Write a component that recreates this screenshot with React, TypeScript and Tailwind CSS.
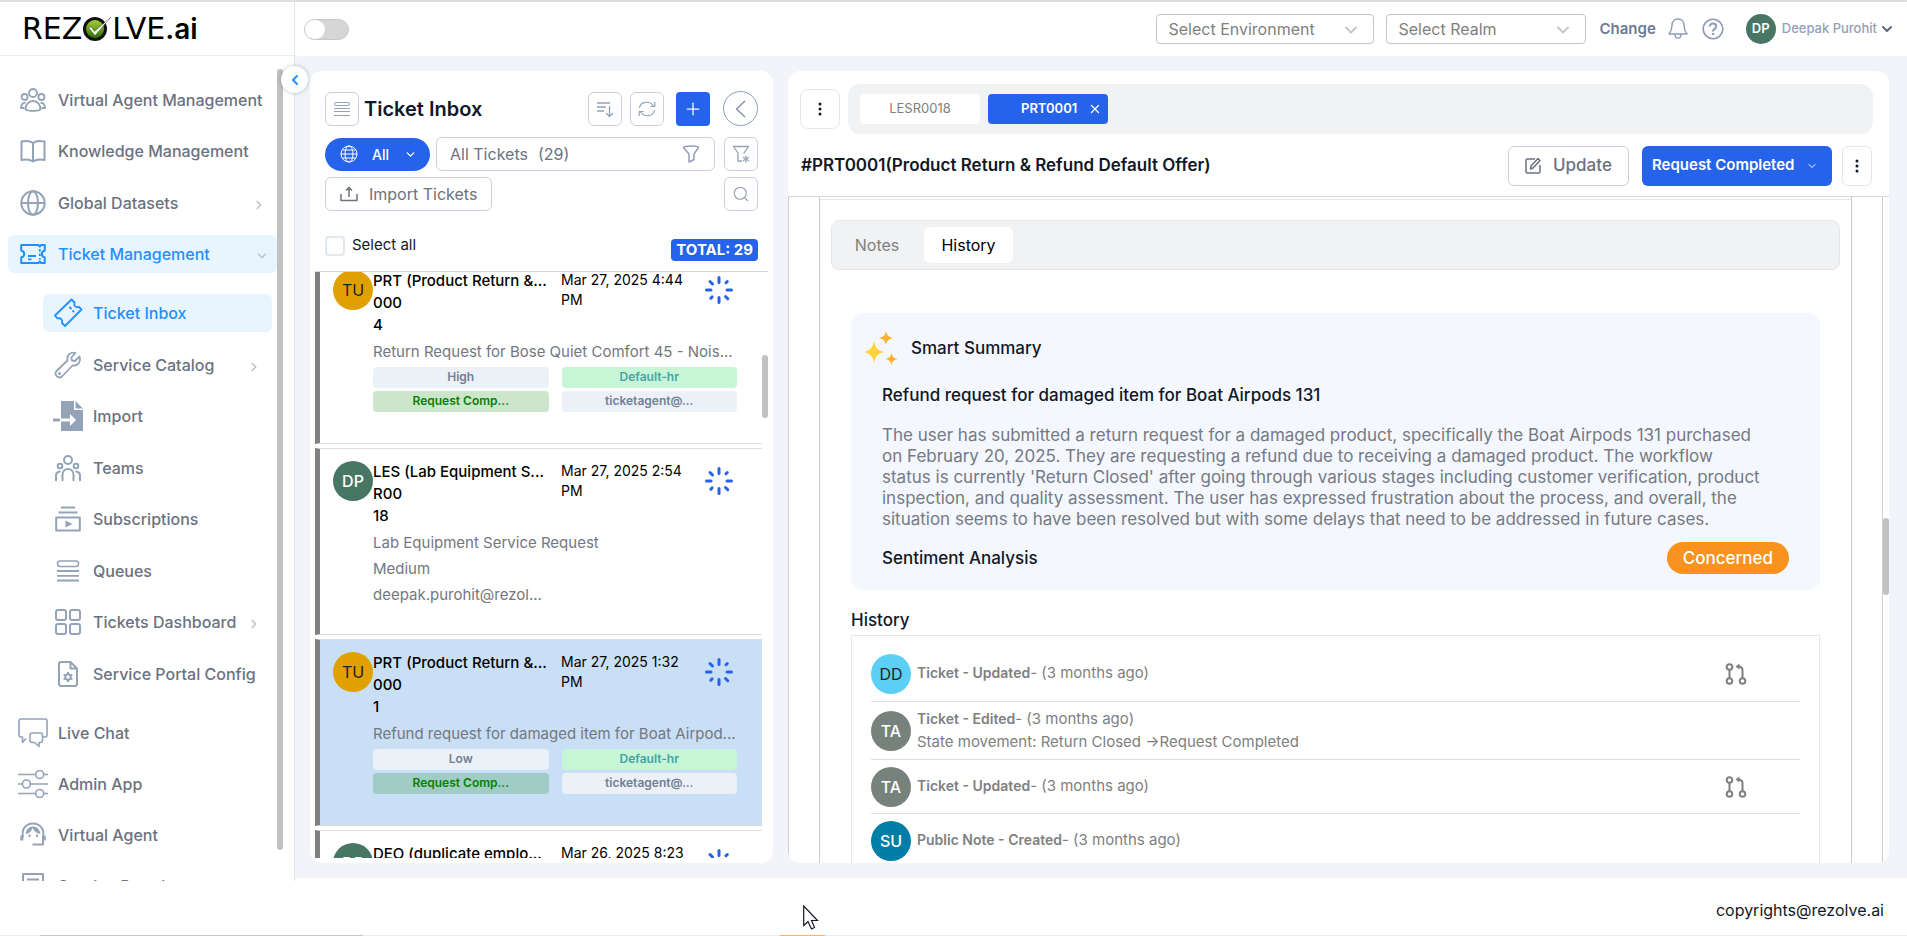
import type { ReactNode } from 'react';
import { ChevronDown, ChevronLeft, ChevronRight, Plus, Search, X } from 'lucide-react';

type IconProps = { children: ReactNode; w?: number; h?: number; className?: string; sw?: number };

function Icon({ children, w = 26, h = 26, className = '', sw = 2 }: IconProps) {
  return (
    <svg
      width={w}
      height={h}
      viewBox={`0 0 ${w} ${h}`}
      fill="none"
      stroke="currentColor"
      strokeWidth={sw}
      strokeLinejoin="round"
      className={`shrink-0 ${className}`}
      aria-hidden="true"
    >
      {children}
    </svg>
  );
}

const icons = {
  users: (
    <Icon sw={1.8}>
      <circle cx="13" cy="6" r="4" />
      <circle cx="4.6" cy="10" r="3" />
      <circle cx="21.4" cy="10" r="3" />
      <path d="M5.5 22.5c0-5 3-8.5 7.5-8.5s7.5 3.5 7.5 8.5c-3 1.800-12 1.800-15 0z" />
      <path d="M5.500 15.800C2.500 15.500 1 18 1 21h3.500M20.500 15.800c3-.3 4.500 2.200 4.500 5.200h-3.500" />
    </Icon>
  ),
  book: (
    <Icon>
      <path d="M13 5c-3-2.300-8-2.300-11.500-1.500v18.500c4-.8 8.500-.5 11.500 1.500 3-2 7.500-2.300 11.500-1.500V3.500C21 2.700 16 2.700 13 5zM13 5v18.500" />
    </Icon>
  ),
  globe: (
    <Icon>
      <circle cx="13" cy="13" r="11.700" />
      <ellipse cx="13" cy="13" rx="5" ry="11.700" />
      <path d="M1.300 13h23.400" />
    </Icon>
  ),
  ticket: (
    <Icon>
      <path d="M1.200 4h17.300l1.300 1.500L21.200 4h3.600v5.500c-4 1-4 6 0 7V22h-3.600l-1.400-1.500L18.500 22H1.200v-5.500c4-1 4-6 0-7z" />
      <path d="M8 15h8M8 18.300h3.500M19.800 8v2.500M19.800 12.500V15M19.800 17v1.500" strokeWidth="1.800" />
    </Icon>
  ),
  inbox: (
    <Icon w={30} h={30} sw={1.8}>
      <path d="M2 17.500 18.500 1.500l3 3c-1 3 1 5.500 4.500 4.500l2.500 2.500L12 28l-3-3c1-3-1-5.500-4.500-4.500z" />
      <path d="m16.500 9 2 2M19.500 12.500l1.500 1.500" />
    </Icon>
  ),
  wrench: (
    <Icon w={28} h={28} sw={1.8}>
      <path d="M25.500 5.500 21 10l-3-.500-.700-3L21.500 2c-4.500-1.300-9 1.500-8 7.500L2.500 20c-3 3.500 2 8.500 5.500 5.500L18.500 14.500c6 1 8.500-4.500 7-9z" />
      <circle cx="5.500" cy="22.500" r=".6" />
    </Icon>
  ),
  fileImport: (
    <Icon w={30} h={30} className="fill-current stroke-none">
      <path d="M8 0h13v9h9v21H8v-9.500h9V25l6-6-6-6v4.500H8zM22.500 0 30 7.500h-7.500z" />
      <path d="M0 17.500h7v3H0z" />
    </Icon>
  ),
  teams: (
    <Icon>
      <circle cx="13" cy="5" r="4" />
      <circle cx="5" cy="11" r="2.300" />
      <circle cx="21" cy="11" r="2.300" />
      <path d="M7.500 26v-6c0-8 11-8 11 0v6M1 26v-5c0-3 1.500-4.500 4.500-4.500M25 26v-5c0-3-1.500-4.500-4.500-4.500" />
    </Icon>
  ),
  subs: (
    <Icon>
      <path d="M6 1.500h14M3.500 6.500h19M1.200 11.500h23.600v13H1.200z" />
      <path d="m10.500 14.500 7 3.500-7 3.500z" className="fill-current stroke-none" />
    </Icon>
  ),
  queues: (
    <Icon w={24} h={24} sw={1.5}>
      <rect x="1.500" y="2" width="21" height="5.500" rx="2.500" />
      <path d="M1 12h22M1 16.800h22M1 21.500h22" strokeWidth="1.800" />
    </Icon>
  ),
  grid: (
    <Icon>
      <rect x="1" y="1" width="10" height="10" rx="2" />
      <rect x="15" y="1" width="10" height="10" rx="2" />
      <rect x="1" y="15" width="10" height="10" rx="2" />
      <rect x="15" y="15" width="10" height="10" rx="2" />
    </Icon>
  ),
  config: (
    <Icon w={20} h={26}>
      <path d="M12.500 1H3a2 2 0 0 0-2 2v20a2 2 0 0 0 2 2h14a2 2 0 0 0 2-2V7.500L12.500 1v6.500H19" />
      <circle cx="10" cy="16" r="2.700" />
      <path d="M10 11v2M10 19v2M5.600 13.500l1.700 1M12.700 17.500l1.700 1M5.600 18.500l1.700-1M12.700 14.500l1.700-1" />
    </Icon>
  ),
  chat: (
    <Icon w={30} h={30} sw={1.6}>
      <path d="M8 20.500 4.500 24.500v-5.500H3c-1.200 0-2-.8-2-2V3c0-1.200.8-2 2-2h24c1.200 0 2 .8 2 2v14c0 1.200-.8 2-2 2h-2" />
      <path d="M14 15h8.500c1.200 0 2 .8 2 2v5.500c0 1.200-.8 2-2 2h-1.500v4l-4.500-4H14c-1.200 0-2-.8-2-2V17c0-1.200.8-2 2-2z" />
    </Icon>
  ),
  sliders: (
    <Icon w={30} h={28} sw={1.6}>
      <path d="M0 4.500h17.500M26 4.500h4M0 14h4.500M13 14h17M0 23.500h17.500M26 23.500h4" />
      <circle cx="21.700" cy="4.500" r="4" />
      <circle cx="8.500" cy="14" r="4" />
      <circle cx="21.700" cy="23.500" r="4" />
    </Icon>
  ),
  agent: (
    <Icon>
      <path d="M3 15.500C1 6 7 1.500 13 1.500S25 6 23 15.500v7H12.500" />
      <path d="M5.500 12c4-.5 6-3 7-6 1.500 3 4 5.500 8 6-1-5.500-4-7.500-7.500-7.500S6.500 6.500 5.500 12z" className="fill-current" strokeWidth="0" />
      <path d="M1.800 13.500v5M24.200 13.500v5" strokeWidth="3" />
      <path d="M9.500 12.500V15M17 12.500V15" />
    </Icon>
  ),
  portal: (
    <Icon w={22} h={26}>
      <path d="M1 25V1h20v24zM5 6.500h12M5 11h12" />
    </Icon>
  ),
};

type NavEntry = { label: string; icon: keyof typeof icons; arrow?: boolean; active?: boolean };

const topNav: NavEntry[] = [
  { label: 'Virtual Agent Management', icon: 'users' },
  { label: 'Knowledge Management', icon: 'book' },
  { label: 'Global Datasets', icon: 'globe', arrow: true },
];

const ticketNav: NavEntry[] = [
  { label: 'Ticket Inbox', icon: 'inbox', active: true },
  { label: 'Service Catalog', icon: 'wrench', arrow: true },
  { label: 'Import', icon: 'fileImport' },
  { label: 'Teams', icon: 'teams' },
  { label: 'Subscriptions', icon: 'subs' },
  { label: 'Queues', icon: 'queues' },
  { label: 'Tickets Dashboard', icon: 'grid', arrow: true },
  { label: 'Service Portal Config', icon: 'config' },
];

const bottomNav: NavEntry[] = [
  { label: 'Live Chat', icon: 'chat' },
  { label: 'Admin App', icon: 'sliders' },
  { label: 'Virtual Agent', icon: 'agent' },
  { label: 'Service Portal', icon: 'portal' },
];

function NavItem({ item, sub }: { item: NavEntry; sub?: boolean }) {
  return (
    <a
      href="#"
      className={`flex h-[38px] items-center rounded-md pl-[10px] pr-[11px] ${sub ? 'ml-[35px] mr-[5px]' : ''} ${
        item.active ? 'bg-[#e8f5ff] text-[#1e90ff]' : 'text-[#6b7280]'
      }`}
    >
      <span className={`flex w-[30px] shrink-0 justify-center ${item.active ? '' : 'text-[#94a3b8]'}`}>
        {icons[item.icon]}
      </span>
      <span className="ml-[10px] flex-1 whitespace-nowrap font-medium">{item.label}</span>
      {item.arrow && <ChevronRight size={14} strokeWidth={3} className="mt-1 text-[#c4c4c4]" />}
    </a>
  );
}

function Logo() {
  return (
    <a
      href="#"
      aria-label="Rezolve.ai home"
      className="flex items-center font-['DejaVu_Sans',sans-serif] text-[30px] leading-none text-black"
    >
      <span>REZ</span>
      <svg width="30" height="26" viewBox="0 0 30 26" aria-hidden="true">
        <defs>
          <linearGradient id="leaf" x1="0" y1="0" x2="0" y2="1">
            <stop offset="0" stopColor="#a3cf3a" />
            <stop offset="1" stopColor="#2f6f06" />
          </linearGradient>
        </defs>
        <circle cx="13" cy="13" r="12" fill="#111" />
        <circle cx="13" cy="13" r="9" fill="url(#leaf)" />
        <path d="M6.500 11.500 9 11l3.500 4.500L29 1 13 19.500z" fill="#fff" stroke="#333" strokeWidth=".4" />
      </svg>
      <span>LVE</span>
      <span className="font-['Inter',sans-serif] text-[28px] font-semibold">.ai</span>
    </a>
  );
}

function Sidebar() {
  return (
    <aside className="relative z-10 -mb-[3px] flex w-[295px] shrink-0 flex-col border-r border-[#e2e4ea] bg-white">
      <div className="flex h-[54px] shrink-0 items-center border-b border-[#ececf2] pl-[22px]">
        <Logo />
      </div>
      <nav className="flex min-h-0 flex-1 flex-col overflow-hidden pl-2 pr-[17px] pt-[25px] text-[16px]">
        <div className="flex h-[192px] shrink-0 flex-col justify-between">
          {topNav.map((item) => (
            <NavItem key={item.label} item={item} />
          ))}
          <a href="#" className="flex h-[38px] items-center rounded-md bg-[#e8f5ff] pl-[10px] pr-2 text-[#1e90ff]">
            <span className="flex w-[30px] shrink-0 justify-center">{icons.ticket}</span>
            <span className="ml-[10px] flex-1 whitespace-nowrap font-medium">Ticket Management</span>
            <ChevronDown size={14} strokeWidth={3} className="mt-1 text-[#c4c4c4]" />
          </a>
        </div>
        <div className="mt-[21px] flex h-[399px] shrink-0 flex-col justify-between">
          {ticketNav.map((item) => (
            <NavItem key={item.label} item={item} sub />
          ))}
        </div>
        <div className="mt-[21px] flex h-[191px] shrink-0 flex-col justify-between">
          {bottomNav.map((item) => (
            <NavItem key={item.label} item={item} />
          ))}
        </div>
      </nav>
      <div className="absolute bottom-[31px] right-[11px] top-[67px] w-[6px] rounded-full bg-[#c1c1c1]" />
      <button
        aria-label="Collapse sidebar"
        className="absolute -right-[14px] top-[64px] flex h-[27px] w-[27px] items-center justify-center rounded-full bg-white text-[#1e90ff] shadow-[0_0_4px_rgba(0,60,40,0.3)]"
      >
        <ChevronLeft size={16} strokeWidth={3} />
      </button>
    </aside>
  );
}

function HeaderSelect({ label, width }: { label: string; width: string }) {
  return (
    <div className={`relative ${width}`}>
      <select
        aria-label={label}
        className="h-[30px] w-full appearance-none rounded border border-[#c4c4c4] bg-white pl-[11px] text-[16px] text-[#808080]"
      >
        <option>{label}</option>
      </select>
      <ChevronDown
        size={20}
        strokeWidth={2.5}
        className="pointer-events-none absolute right-[13px] top-[6px] text-[#c8c8c8]"
      />
    </div>
  );
}

function Header() {
  return (
    <header className="flex h-[54px] shrink-0 items-center bg-white pl-[9px] pr-[12px] shadow-[0_1px_3px_rgba(60,60,100,0.12)]">
      <input
        type="checkbox"
        role="switch"
        aria-label="Toggle theme"
        className="flex h-[21px] w-[45px] appearance-none items-center rounded-full border border-[#c8c8c8] bg-[#d6d6d6] before:h-[19px] before:w-[20px] before:rounded-full before:bg-white"
      />
      <div className="ml-auto flex items-center">
        <HeaderSelect label="Select Environment" width="w-[218px]" />
        <div className="w-3" />
        <HeaderSelect label="Select Realm" width="w-[200px]" />
        <button className="ml-[13px] text-[15px] font-semibold text-[#6b7a94]">Change</button>
        <button aria-label="Notifications" className="ml-[12px] text-[#8d9bb5]">
          <Icon w={20} h={22} sw={1.4}>
            <path d="M10 1C6.500 1 4 3.500 4 7.500c0 4.500-1 6-3 8.500h18c-2-2.500-3-4-3-8.500C16 3.500 13.500 1 10 1zM7 16c0 5.500 6 5.500 6 0" />
          </Icon>
        </button>
        <button aria-label="Help" className="ml-[14px] text-[#8d9bb5]">
          <Icon w={22} h={22} sw={1.6}>
            <circle cx="11" cy="11" r="9.800" />
            <path d="M7.800 8.500c0-4 6.400-3.800 6.400 0 0 2.500-3.200 2.300-3.200 5" strokeWidth="2" />
            <path d="M11 15v2" strokeWidth="2.200" />
          </Icon>
        </button>
        <button className="ml-[22px] flex items-center text-[13px] font-medium text-[#94a0bb]">
          <span className="mr-[6px] flex h-[30px] w-[30px] items-center justify-center rounded-full bg-[#477665] font-semibold text-white">
            DP
          </span>
          Deepak Purohit
          <ChevronDown size={16} strokeWidth={3} className="ml-[2px] text-[#5f6b80]" />
        </button>
      </div>
    </header>
  );
}

function Spinner() {
  return (
    <svg
      width="30"
      height="30"
      viewBox="0 0 30 30"
      stroke="#2563eb"
      strokeWidth="3"
      strokeLinecap="round"
      className="shrink-0"
      aria-hidden="true"
    >
      <path d="M15 2.500v5M15 22.500v5M2.500 15h4.500M23 15h4.500M6 6.500l2.500 2.500M23.300 6.500l-1.300 1.300M6.800 23.200l1.300-1.300M21.500 21.500l2.300 2.300" />
    </svg>
  );
}

type Ticket = {
  key: string;
  initials: string;
  avatar: string;
  title: string;
  idTop: string;
  idBottom: string;
  date: string;
  desc: string;
  selected?: boolean;
  badges?: { text: string; tone: string }[];
  lines?: string[];
};

const grayTone = 'bg-[#ebf1f6] text-[#718096]';
const mintTone = 'bg-[#c6f6d5] text-[#45a3a5]';

const tickets: Ticket[] = [
  {
    key: 'PRT0004',
    initials: 'TU',
    avatar: 'bg-[#e0a000] text-[#222]',
    title: 'PRT (Product Return &...',
    idTop: '000',
    idBottom: '4',
    date: 'Mar 27, 2025 4:44 PM',
    desc: 'Return Request for Bose Quiet Comfort 45 - Nois...',
    badges: [
      { text: 'High', tone: grayTone },
      { text: 'Default-hr', tone: mintTone },
      { text: 'Request Comp...', tone: 'bg-[#cce6cc] text-[#058005]' },
      { text: 'ticketagent@...', tone: grayTone },
    ],
  },
  {
    key: 'LESR0018',
    initials: 'DP',
    avatar: 'bg-[#477665] text-white font-medium',
    title: 'LES (Lab Equipment S...',
    idTop: 'R00',
    idBottom: '18',
    date: 'Mar 27, 2025 2:54 PM',
    desc: 'Lab Equipment Service Request',
    lines: ['Medium', 'deepak.purohit@rezol...'],
  },
  {
    key: 'PRT0001',
    initials: 'TU',
    avatar: 'bg-[#e0a000] text-[#222]',
    title: 'PRT (Product Return &...',
    idTop: '000',
    idBottom: '1',
    date: 'Mar 27, 2025 1:32 PM',
    desc: 'Refund request for damaged item for Boat Airpod...',
    selected: true,
    badges: [
      { text: 'Low', tone: grayTone },
      { text: 'Default-hr', tone: mintTone },
      { text: 'Request Comp...', tone: 'bg-[#a0ccc5] text-[#058005]' },
      { text: 'ticketagent@...', tone: grayTone },
    ],
  },
  {
    key: 'DEO',
    initials: 'DP',
    avatar: 'bg-[#477665] text-white font-medium',
    title: 'DEO (duplicate emplo...',
    idTop: '',
    idBottom: '',
    date: 'Mar 26, 2025 8:23',
    desc: '',
  },
];

function TicketCard({ t }: { t: Ticket }) {
  return (
    <li
      className={`flex h-[187px] shrink-0 border-y border-l-[5px] border-y-[#dcdee2] border-l-[#808080] pl-[13px] pr-[25px] pt-3 ${
        t.selected ? 'bg-[#c8dff6]' : 'bg-white'
      }`}
    >
      <span className={`flex h-10 w-10 shrink-0 items-center justify-center rounded-full text-[16px] ${t.avatar}`}>
        {t.initials}
      </span>
      <div className="min-w-0 flex-1">
        <div className="flex h-[69px]">
          <div className="w-[188px] shrink-0 whitespace-nowrap text-[15px] font-medium leading-[22px] text-black">
            <p>{t.title}</p>
            <p>{t.idTop}</p>
            <p>{t.idBottom}</p>
          </div>
          <p className="w-[126px] text-[14px] leading-[20px] text-black">{t.date}</p>
          <div className="ml-auto mr-[3px] mt-[5px]">
            <Spinner />
          </div>
        </div>
        <p className="truncate text-[15px] leading-[26px] text-[#73777f]">{t.desc}</p>
        {t.lines?.map((line) => (
          <p key={line} className="text-[15px] leading-[26px] text-[#73777f]">
            {line}
          </p>
        ))}
        {t.badges && (
          <div className="mt-[2px] grid grid-cols-2 gap-x-[13px] gap-y-[3px] text-center text-[12px] font-semibold">
            {t.badges.map((b) => (
              <span key={b.text} className={`h-[21px] rounded leading-[20px] ${b.tone}`}>
                {b.text}
              </span>
            ))}
          </div>
        )}
      </div>
    </li>
  );
}

function IconButton({ label, children }: { label: string; children: ReactNode }) {
  return (
    <button
      aria-label={label}
      className="flex h-[34px] w-[34px] shrink-0 items-center justify-center rounded-md border border-[#cbcfdb] bg-white text-[#94a3b8]"
    >
      {children}
    </button>
  );
}

function InboxPanel() {
  return (
    <section className="relative flex w-[463px] shrink-0 flex-col rounded-xl bg-white pt-5">
      <div className="flex h-[35px] items-center px-[15px]">
        <IconButton label="Queue list">
          <Icon w={16} h={16} sw={1}>
            <rect x=".5" y="1.500" width="15" height="3" rx="1.500" />
            <path d="M0 7.500h16M0 10.500h16M0 14.500h16" />
          </Icon>
        </IconButton>
        <h1 className="ml-[5px] text-[20px] font-semibold text-[#111827]">Ticket Inbox</h1>
        <div className="ml-auto flex items-center">
          <IconButton label="Sort">
            <Icon w={18} h={18} sw={1.3}>
              <path d="M1 3h13M1 7h9M1 11h7M13.500 6v10.500M10 13l3.500 3.500L17 13" />
            </Icon>
          </IconButton>
          <div className="w-2" />
          <IconButton label="Refresh">
            <Icon w={18} h={18} sw={1.2}>
              <path d="M1.500 8C2.500 1 12 .500 15.500 6M16.800 2v4.500h-4.500M16.500 10c-1 7-10.500 7.500-14 2M1.200 16v-4.500h4.500" />
            </Icon>
          </IconButton>
          <button
            aria-label="New ticket"
            className="ml-3 flex h-[34px] w-[34px] items-center justify-center rounded bg-[#2563eb] text-white"
          >
            <Plus size={20} strokeWidth={1.5} />
          </button>
          <button
            aria-label="Back"
            className="ml-[13px] flex h-[35px] w-[35px] items-center justify-center rounded-full border border-[#8d9bb5] text-[#7c8aa5]"
          >
            <Icon w={12} h={18} sw={1.2}>
              <path d="m10 1-8.500 8 8.500 8" />
            </Icon>
          </button>
        </div>
      </div>

      <div className="mt-[11px] flex items-center px-[15px]">
        <button className="flex h-[33px] w-[105px] items-center rounded-full bg-[#2563eb] pl-[15px] text-[14px] font-medium text-white">
          <Icon w={18} h={18} sw={1}>
            <circle cx="9" cy="9" r="8" />
            <ellipse cx="9" cy="9" rx="4" ry="8" />
            <path d="M1 9h16M2.500 5h13M2.500 13h13" />
          </Icon>
          <span className="ml-[14px]">All</span>
          <ChevronDown size={13} strokeWidth={2.5} className="ml-[15px]" />
        </button>
        <button className="ml-[6px] flex h-[34px] flex-1 items-center rounded-md border border-[#cbcfdb] pl-[13px] pr-[14px] text-[16px] text-[#6b7280]">
          <span>All Tickets</span>
          <span className="ml-[10px]">(29)</span>
          <Icon w={18} h={18} sw={1.4} className="ml-auto text-[#8d9bb5]">
            <path d="M1.500 2.500C1 1.500 5 1 9 1s8 .5 7.500 1.500L12 9v5.500L7 17V9z" />
          </Icon>
        </button>
        <div className="w-[9px]" />
        <IconButton label="Filter settings">
          <Icon w={18} h={18} sw={1.3}>
            <path d="M10 16H6V8L1.500 1.500h15L12 8v1" />
            <path d="M14 10.500v7M11 12.300l6 3.500M17 12.300l-6 3.500" />
          </Icon>
        </IconButton>
      </div>

      <div className="mt-[6px] flex items-center justify-between px-[15px]">
        <button className="flex h-[34px] w-[167px] items-center rounded-md border border-[#cbcfdb] pl-[14px] text-[16px] text-[#6b7280]">
          <Icon w={18} h={16} sw={1.5}>
            <path d="M1 8v6.500h16V8M9 11V2M6 4.500 9 1.500l3 3" />
          </Icon>
          <span className="ml-[11px]">Import Tickets</span>
        </button>
        <IconButton label="Search">
          <Search size={18} strokeWidth={1.5} />
        </IconButton>
      </div>

      <div className="mb-[6px] mt-4 flex h-[37px] items-center justify-between px-[15px]">
        <label className="flex items-center text-[15px] text-[#111827]">
          <input
            type="checkbox"
            className="mr-[7px] h-5 w-5 appearance-none rounded-sm border-2 border-[#e2e8f0] bg-white"
          />
          Select all
        </label>
        <span className="mt-2 rounded-sm bg-[#2563eb] px-[5px] text-[15px] font-bold leading-[22px] text-white">
          TOTAL: 29
        </span>
      </div>

      {/* scrolled a few pixels into the list */}
      <div className="mx-[5px] mb-[5px] mt-px min-h-0 flex-1 overflow-hidden border-t border-[#d5d7db]">
        <ul className="-mt-[15px] mr-[6px] flex flex-col gap-1">
          {tickets.map((t) => (
            <TicketCard key={t.key} t={t} />
          ))}
        </ul>
      </div>
      <div className="absolute right-[5px] top-[284px] h-[63px] w-[6px] rounded-full bg-[#c1c1c1]" />
    </section>
  );
}

function Kebab() {
  return (
    <svg width="4" height="14" viewBox="0 0 4 14" fill="#111827" aria-hidden="true">
      <circle cx="2" cy="2" r="1.500" />
      <circle cx="2" cy="7" r="1.500" />
      <circle cx="2" cy="12" r="1.500" />
    </svg>
  );
}

function PullIcon() {
  return (
    <svg
      width="22"
      height="22"
      viewBox="0 0 22 22"
      fill="none"
      stroke="#808080"
      strokeWidth="2"
      className="mr-[53px] shrink-0"
      aria-hidden="true"
    >
      <circle cx="4.500" cy="4" r="2.800" />
      <circle cx="4.500" cy="18" r="2.800" />
      <circle cx="17.500" cy="18" r="2.800" />
      <path d="M4.500 7v8M17.500 15V7c0-2.500-1-3.500-4.500-3.500" />
      <path d="M14.500.5v6l-4-3z" fill="#808080" strokeWidth="0" />
    </svg>
  );
}

const history = [
  { who: 'DD', color: 'bg-[#5bcff5] text-[#222]', what: 'Ticket - Updated', h: 'h-[56px]', pull: true },
  { who: 'TA', color: 'bg-[#78827c] text-white font-medium', what: 'Ticket - Edited', h: 'h-[58px]', note: true },
  { who: 'TA', color: 'bg-[#78827c] text-white font-medium', what: 'Ticket - Updated', h: 'h-[54px]', pull: true },
  { who: 'SU', color: 'bg-[#007ea7] text-white font-medium', what: 'Public Note - Created', h: 'h-[54px]' },
];

function TicketPanel() {
  return (
    <section className="relative flex min-w-0 flex-1 flex-col overflow-hidden rounded-xl bg-white">
      <div className="flex h-[70px] shrink-0 items-center pl-3 pr-4 pt-[6px]">
        <button
          aria-label="Tab options"
          className="flex h-10 w-10 shrink-0 items-center justify-center rounded-lg border border-[#e2e8f0]"
        >
          <Kebab />
        </button>
        <div className="ml-2 flex h-[50px] flex-1 items-center gap-2 rounded-xl bg-[#f1f2f4] px-3 text-[13px]">
          <button className="h-[30px] w-[120px] rounded bg-white text-[#808080]">LESR0018</button>
          <button className="flex h-[30px] w-[120px] items-center rounded bg-[#2563eb] pl-[33px] pr-[6px] font-semibold text-white">
            PRT0001
            <X size={14} strokeWidth={2.2} className="ml-auto" />
          </button>
        </div>
      </div>

      <div className="flex h-[56px] shrink-0 items-center border-b border-[#d5d7db] pb-[6px] pl-[13px] pr-[17px]">
        <h2 className="text-[17px] font-semibold text-[#111827]">#PRT0001(Product Return &amp; Refund Default Offer)</h2>
        <button className="ml-auto flex h-10 w-[121px] items-center rounded-md border border-[#cbcfdb] pl-4 text-[17px] font-medium text-[#6b7280]">
          <Icon w={16} h={17} sw={1.5}>
            <path d="M10 2H2.500C1.500 2 1 2.500 1 3.500v11c0 1 .5 1.500 1.500 1.500h11c1 0 1.500-.5 1.500-1.500V8" />
            <path d="m5.500 12 .5-3 7-7.500 2 2-7 7.500z" />
          </Icon>
          <span className="ml-[12px]">Update</span>
        </button>
        <button className="ml-[13px] flex h-10 w-[190px] items-center rounded-md bg-[#2563eb] pl-[10px] text-[15px] font-semibold text-white">
          Request Completed
          <ChevronDown size={12} strokeWidth={2} className="ml-[12px]" />
        </button>
        <button
          aria-label="More actions"
          className="ml-[10px] flex h-10 w-[30px] items-center justify-center rounded-md border border-[#e2e8f0]"
        >
          <Kebab />
        </button>
      </div>

      <div className="mr-[6px] min-h-0 flex-1 overflow-hidden border-x border-[#cbcdd8] px-[30px]">
        <div className="h-full border-x border-[#c8cad4] pt-[2px]">
          <div className="border-t border-[#e2e5ee] pt-5">
            <div className="mx-[11px] flex h-[50px] items-center gap-[7px] rounded-lg border border-[#e6e7e9] bg-[#f1f2f4] px-[5px] text-[16px]">
              <button className="h-[36px] w-[80px] text-[#808080]">Notes</button>
              <button className="h-[36px] w-[89px] rounded-md bg-white text-black">History</button>
            </div>
            <div className="mx-[31px]">
              <div className="mt-[43px] rounded-xl bg-[#f4f7fe] px-[31px] pb-[16px] pt-[17px]">
                <div className="-ml-[18px] flex items-center">
                  <svg width="34" height="36" viewBox="0 0 34 36" aria-hidden="true">
                    <path d="M10 11c1.500 7 3.500 9 10 11-6.500 2-8.500 4-10 11-1.500-7-3.500-9-10-11 6.500-2 8.500-4 10-11z" fill="#ffd43b" />
                    <path d="M22 1c1 4.500 2.500 6 7 7-4.500 1-6 2.500-7 7-1-4.500-2.500-6-7-7 4.500-1 6-2.500 7-7z" fill="#ffb02e" />
                    <path d="M27.500 23c.8 3.500 2 5 6 6-4 1-5.200 2.500-6 6-.8-3.500-2-5-6-6 4-1 5.200-2.500 6-6z" fill="#ffb02e" />
                  </svg>
                  <h3 className="ml-[13px] text-[17px] font-medium leading-6 text-[#111827]">Smart Summary</h3>
                </div>
                <h3 className="mt-[17px] text-[17px] font-medium leading-6 text-[#111827]">
                  Refund request for damaged item for Boat Airpods 131
                </h3>
                <p className="mt-[18px] pr-[25px] text-[17px] leading-[21px] text-[#757a83]">
                  The user has submitted a return request for a damaged product, specifically the Boat Airpods 131 purchased
                  on February 20, 2025. They are requesting a refund due to receiving a damaged product. The workflow
                  status is currently 'Return Closed' after going through various stages including customer verification,
                  product inspection, and quality assessment. The user has expressed frustration about the process, and
                  overall, the situation seems to have been resolved but with some delays that need to be addressed in
                  future cases.
                </p>
                <div className="mt-[12px] flex items-center justify-between">
                  <h3 className="text-[17px] font-medium leading-6 text-[#111827]">Sentiment Analysis</h3>
                  <span className="rounded-full bg-[#f9931e] px-4 text-[17px] font-medium leading-[32px] text-white">
                    Concerned
                  </span>
                </div>
              </div>
              <h3 className="mt-[18px] text-[17px] font-medium leading-6 text-[#111827]">History</h3>
              <ul className="mt-[3px] border border-b-0 border-[#e6e7e9] px-[19px] pt-[10px] text-[15px] text-[#808080]">
                {history.map((row, i) => (
                  <li key={i} className={`flex items-center border-b border-[#dcdee0] ${row.h}`}>
                    <span
                      className={`flex h-10 w-10 shrink-0 items-center justify-center rounded-full text-[16px] ${row.color}`}
                    >
                      {row.who}
                    </span>
                    <div className="ml-[6px] flex-1">
                      <p>
                        <b className="text-[14px] font-semibold">{row.what}</b>- (3 months ago)
                      </p>
                      {row.note && <p>State movement: Return Closed →Request Completed</p>}
                    </div>
                    {row.pull && <PullIcon />}
                  </li>
                ))}
              </ul>
            </div>
          </div>
        </div>
      </div>
      <div className="absolute right-0 top-[447px] h-[77px] w-[6px] rounded-full bg-[#c1c1c1]" />
    </section>
  );
}

export default function App() {
  return (
    <div className="flex h-screen flex-col overflow-hidden bg-white font-['Inter',sans-serif] text-[16px]">
      <div className="h-[2px] shrink-0 bg-[#e0e0e0]" />
      <div className="flex min-h-0 flex-1">
        <Sidebar />
        <div className="flex min-w-0 flex-1 flex-col">
          <Header />
          <main className="flex min-h-0 flex-1 gap-[15px] bg-[#f3f4f9] py-[15px] pl-[15px] pr-[18px]">
            <InboxPanel />
            <TicketPanel />
          </main>
        </div>
      </div>
      <footer className="flex h-[57px] shrink-0 items-center justify-end pr-[23px] pt-[7px] text-[16px] text-[#111827]">
        copyrights@rezolve.ai
      </footer>
      <div className="flex h-px shrink-0 bg-[#ebebeb]">
        <div className="ml-10 w-[323px] bg-[#c8c8c8]" />
        <div className="ml-[417px] w-[45px] bg-[#f5b27a]" />
      </div>
      {/* mouse pointer */}
      <svg width="17" height="26" viewBox="0 0 17 26" className="absolute left-[803px] top-[905px]" aria-hidden="true">
        <path d="M.7 1v19.500l4.300-4 3.500 7.500 3-1.500-3-7h6z" fill="#fff" stroke="#1a1a2a" strokeWidth="1.200" />
      </svg>
    </div>
  );
}
